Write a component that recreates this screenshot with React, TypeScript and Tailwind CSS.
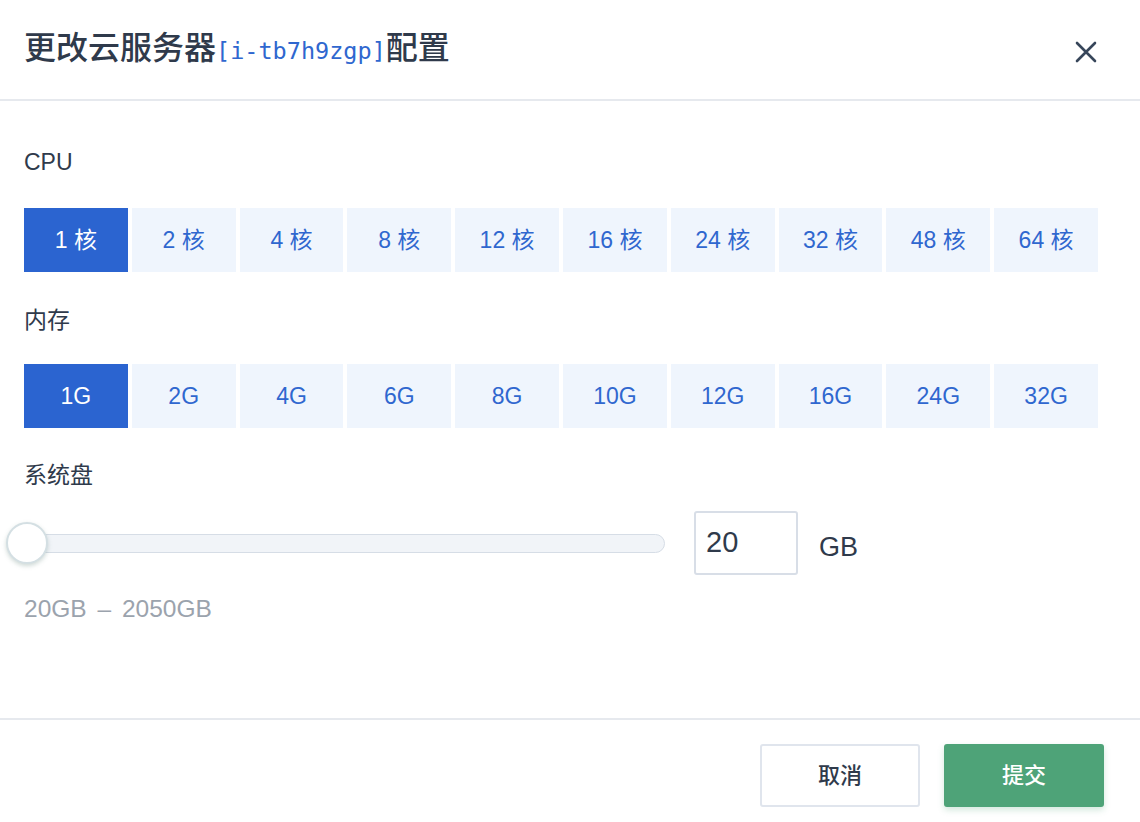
import { useState } from "react";

const cpus = [1, 2, 4, 8, 12, 16, 24, 32, 48, 64];
const mems = ["1G", "2G", "4G", "6G", "8G", "10G", "12G", "16G", "24G", "32G"];

function Options({
  items,
  value,
  onChange,
}: {
  items: string[];
  value: number;
  onChange: (i: number) => void;
}) {
  return (
    <div className="grid w-[1074px] grid-cols-10 gap-1">
      {items.map((label, i) => (
        <button
          key={label}
          type="button"
          onClick={() => onChange(i)}
          className={
            i === value
              ? "flex h-16 items-center justify-center bg-[#2b64d0] text-[23px] text-white"
              : "flex h-16 items-center justify-center bg-[#eff5fd] text-[23px] text-[#2f67cf]"
          }
        >
          {label}
        </button>
      ))}
    </div>
  );
}

export default function App() {
  const [cpu, setCpu] = useState(0);
  const [mem, setMem] = useState(0);

  return (
    <div
      className="flex h-[822px] w-[1140px] flex-col bg-white text-[#2f3a4b]"
      style={{ fontFamily: '"Liberation Sans", "Noto Sans CJK SC", sans-serif' }}
    >
      <div className="flex h-[101px] shrink-0 items-center justify-between border-b-2 border-[#e6e9ee] pl-6 pr-[43px]">
        <h1 className="-mt-1 text-[32px] font-medium leading-none">
          更改云服务器
          <span className="font-['DejaVu_Sans_Mono',monospace] text-[23.5px] font-normal text-[#2f67cf]">
            [i-tb7h9zgp]
          </span>
          配置
        </h1>
        <svg width="22" height="22" viewBox="0 0 22 22" className="mt-1 text-[#37465a]">
          <path d="M2 2L20 20M20 2L2 20" stroke="currentColor" strokeWidth="2.6" strokeLinecap="round" />
        </svg>
      </div>

      <div className="flex flex-1 flex-col px-6">
        <div className="mt-[49px] text-[23px] leading-6">CPU</div>
        <div className="mt-[34px]">
          <Options items={cpus.map((c) => `${c} 核`)} value={cpu} onChange={setCpu} />
        </div>

        <div className="mt-[36px] text-[23px] leading-6">内存</div>
        <div className="mt-[32px]">
          <Options items={mems} value={mem} onChange={setMem} />
        </div>

        <div className="mt-[35px] text-[23px] leading-6">系统盘</div>
        <div className="mt-[24px] flex items-center">
          <div className="relative -ml-[18px] flex h-[64px] w-[659px] items-center">
            <div className="ml-[20px] h-[19px] flex-1 rounded-full border border-[#d6dde6] bg-[#f1f4f8]" />
            <div className="absolute left-0 top-[11px] h-[42px] w-[42px] rounded-full border-2 border-[#d4dfe3] bg-white shadow-[0_2px_4px_rgba(120,150,140,0.35)]" />
          </div>
          <div className="ml-[29px] flex h-[64px] w-[104px] items-center rounded-[3px] border-2 border-[#d8dee7] pl-[10px] text-[29px]">
            20
          </div>
          <div className="ml-[21px] mt-2 text-[27px]">GB</div>
        </div>
        <div className="mt-[16px] text-[24.5px] text-[#9ba3ad]">
          20GB <span className="px-1">–</span> 2050GB
        </div>
      </div>

      <div className="flex h-[104px] shrink-0 items-start justify-end gap-6 border-t-2 border-[#e6e9ee] pr-9 pt-[24px]">
        <button
          type="button"
          className="flex h-[63px] w-[160px] items-center justify-center rounded-[3px] border-2 border-[#e0e5ed] bg-white text-[22px] font-medium text-[#2f3a4b]"
        >
          取消
        </button>
        <button
          type="button"
          className="flex h-[63px] w-[160px] items-center justify-center rounded-[3px] bg-[#4ea378] text-[22px] font-medium text-white shadow-[0_3px_6px_rgba(78,163,120,0.25)]"
        >
          提交
        </button>
      </div>
    </div>
  );
}
